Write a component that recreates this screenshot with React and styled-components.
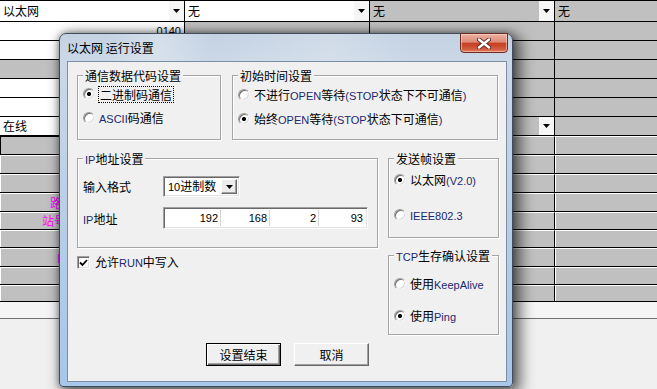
import React from 'react';
import styled, { createGlobalStyle } from 'styled-components';

const Global = createGlobalStyle`
  html, body { margin: 0; padding: 0; background: #f0f0f0; }
  body { font-family: "Noto Sans CJK SC", sans-serif; font-size: 12px; color: #000; }
  #root { width: 657px; height: 389px; overflow: hidden; }
`;

const Screen = styled.div`
  position: relative;
  width: 657px;
  height: 389px;
  overflow: hidden;
  background: #f0f0f0;
`;

/* ---------- background sheet ---------- */
const Sheet = styled.div`
  display: flex;
  flex-direction: column;
  width: 657px;
  font-family: "Noto Sans CJK SC", sans-serif;
  font-size: 12px;
`;

const SheetRow = styled.div`
  display: grid;
  grid-template-columns: 185px 185px 185px 1fr;
  box-sizing: border-box;
  height: ${(p) => p.$h}px;
  border-top: ${(p) => (p.$top ? '1px solid #000' : '0')};
  border-bottom: 1px solid #000;
`;

const Cell = styled.div`
  display: flex;
  align-items: center;
  min-width: 0;
  overflow: hidden;
  white-space: nowrap;
  background: ${(p) => (p.$white ? '#fff' : '#c0c0c0')};
  border-right: 1px solid #000;
  padding-left: 3px;
  &:last-child { border-right: 0; }
`;

const CellText = styled.span`
  flex: 1;
  line-height: 14px;
  text-align: ${(p) => (p.$right ? 'right' : 'left')};
  padding-right: ${(p) => (p.$right ? '3px' : '0')};
  font-family: ${(p) => (p.$num ? '"Liberation Sans", Arial, sans-serif' : 'inherit')};
  font-size: ${(p) => (p.$num ? '11px' : '12px')};
`;

const DropBtn = styled.span`
  flex: none;
  align-self: stretch;
  width: 15px;
  background: #f6f6f6;
  display: flex;
  align-items: center;
  justify-content: center;
`;

const LowCell = styled.div`
  display: flex;
  align-items: center;
  min-width: 0;
  overflow: hidden;
  white-space: nowrap;
  background: #c0c0c0;
  border-top: 1px solid ${(p) => (p.$focus ? '#000' : '#fff')};
  border-left: 1px solid ${(p) => (p.$focus ? '#000' : '#fff')};
  border-right: 1px solid #000;
  padding-left: ${(p) => p.$indent || 0}px;
  color: #ff00ff;
  line-height: 14px;
  &:last-child { border-right: 0; }
`;

const SheetFooter = styled.div`
  height: 16px;
  background: #f5f5f5;
  border-bottom: 1px solid #6e6e6e;
`;

/* ---------- dialog ---------- */
const Dialog = styled.div`
  position: absolute;
  left: 59px;
  top: 33px;
  width: 454px;
  height: 354px;
  box-sizing: border-box;
  display: flex;
  flex-direction: column;
  padding: 0 5px 4px 7px;
  border: 1px solid #3e4c5c;
  border-radius: 7px 7px 4px 4px;
  background: linear-gradient(180deg, #c4d2e2 0px, #cbd8e7 30px, #b7cde5 55%, #a7c6ea 100%);
  box-shadow: 5px 4px 14px 3px rgba(0, 0, 0, 0.55), 0 0 6px rgba(0, 0, 0, 0.35);
  font-family: "Noto Sans CJK SC", sans-serif;
  font-size: 12px;
`;

const TitleBar = styled.div`
  height: 27px;
  flex: none;
  display: flex;
  align-items: flex-start;
  justify-content: space-between;
  background: linear-gradient(100deg, rgba(255,255,255,0) 10%, rgba(255,255,255,0.28) 22%, rgba(255,255,255,0) 34%, rgba(255,255,255,0.2) 60%, rgba(255,255,255,0) 78%);
  margin: 0 -5px 0 -7px;
  padding: 0 4px 0 7px;
`;

const Title = styled.span`
  margin-top: 6px;
  line-height: 16px;
  color: #000;
`;

const CloseBtn = styled.span`
  margin-top: -1px;
  width: 48px;
  height: 20px;
  box-sizing: border-box;
  border: 1px solid #6a2a20;
  border-radius: 0 0 4px 4px;
  box-shadow: inset 0 0 0 1px rgba(255, 220, 210, 0.55);
  background: linear-gradient(180deg, #eab1a4 0%, #de8a76 45%, #c63f22 52%, #d0573b 80%, #e07a5c 100%);
  display: flex;
  align-items: center;
  justify-content: center;
`;

const Client = styled.div`
  flex: 1;
  display: flex;
  flex-direction: column;
  border: 1px solid #7b8fa4;
  background: #f0f0f0;
  padding: 13px 8px 0 9px;
`;

const TopRow = styled.div`
  display: flex;
  gap: 11px;
`;

const MidRow = styled.div`
  display: flex;
  gap: 10px;
  margin-top: 18px;
`;

const Col = styled.div`
  display: flex;
  flex-direction: column;
  gap: ${(p) => p.$gap || 0}px;
`;

const Group = styled.div`
  box-sizing: border-box;
  width: ${(p) => p.$w}px;
  height: ${(p) => p.$h}px;
  border: 1px solid #a5a5a5;
  box-shadow: inset 1px 1px 0 #fff, 1px 1px 0 #fff;
  display: flex;
  flex-direction: column;
  padding-left: 5px;
`;

const Caption = styled.span`
  align-self: flex-start;
  margin-top: -8px;
  padding: 0 2px;
  line-height: 15px;
  background: #f0f0f0;
  white-space: nowrap;
`;

const L = styled.span`
  font-family: "Liberation Sans", Arial, sans-serif;
  font-size: 11px;
  color: ${(p) => (p.$plain ? '#000' : '#1a2870')};
`;

const RadioRow = styled.label`
  display: flex;
  align-items: center;
  gap: 4px;
  height: 18px;
  margin-top: ${(p) => p.$mt}px;
  white-space: nowrap;
  line-height: 14px;
`;

const RadioDot = styled.span`
  flex: none;
  width: 12px;
  height: 12px;
  box-sizing: border-box;
  border-radius: 50%;
  border: 1px solid;
  border-color: #9c9c9c #f4f4f4 #f4f4f4 #9c9c9c;
  box-shadow: inset 1px 1px 0 #707070, inset -1px -1px 0 #dadada;
  background: ${(p) =>
    p.$on
      ? 'radial-gradient(circle at 50% 50%, #000 0, #000 1.7px, #fff 2.4px)'
      : '#fff'};
`;

const Focus = styled.span`
  border: 1px dotted #000;
  padding: 0 1px;
  margin-left: -1px;
  line-height: 15px;
`;

const FieldRow = styled.div`
  display: grid;
  grid-template-columns: 80px auto;
  align-items: center;
  margin-top: ${(p) => p.$mt}px;
  height: ${(p) => p.$h}px;
  white-space: nowrap;
`;

const Sunken = styled.div`
  box-sizing: border-box;
  border: 1px solid;
  border-color: #a0a0a0 #fff #fff #a0a0a0;
  box-shadow: inset 1px 1px 0 #696969, inset -1px -1px 0 #e3e3e3;
  background: #fff;
`;

const Select = styled(Sunken)`
  width: 77px;
  height: 21px;
  display: flex;
  align-items: center;
  padding: 2px;
`;

const SelectText = styled.span`
  flex: 1;
  padding-left: 2px;
  line-height: 14px;
`;

const SelectBtn = styled.span`
  flex: none;
  width: 16px;
  height: 15px;
  box-sizing: border-box;
  background: #ececec;
  border: 1px solid;
  border-color: #fff #696969 #696969 #fff;
  box-shadow: inset -1px -1px 0 #a0a0a0;
  display: flex;
  align-items: center;
  justify-content: center;
`;

const IpBox = styled(Sunken)`
  width: 205px;
  height: 22px;
  display: grid;
  grid-template-columns: 55px 49px 49px 1fr;
  padding: 2px;
`;

const IpCell = styled.span`
  display: flex;
  align-items: center;
  justify-content: flex-end;
  padding-right: 2px;
  border-right: ${(p) => (p.$last ? '0' : '1px solid #d6d6d6')};
  font-family: "Liberation Sans", Arial, sans-serif;
  font-size: 11px;
`;

const CheckRow = styled.label`
  display: flex;
  align-items: center;
  gap: 5px;
  margin-top: 8px;
  height: 13px;
  line-height: 14px;
  white-space: nowrap;
`;

const CheckBox = styled(Sunken)`
  width: 13px;
  height: 13px;
  display: flex;
  align-items: center;
  justify-content: center;
`;

const ButtonRow = styled.div`
  display: flex;
  justify-content: center;
  gap: 13px;
  margin-top: 8px;
`;

const Button = styled.button`
  width: 75px;
  height: 23px;
  box-sizing: border-box;
  font-family: "Noto Sans CJK SC", sans-serif;
  font-size: 12px;
  line-height: 14px;
  color: #000;
  padding: 0;
  background: #f0f0f0;
  border: 1px solid;
  border-color: ${(p) => (p.$default ? '#000' : '#fff #696969 #696969 #fff')};
  box-shadow: ${(p) =>
    p.$default
      ? 'inset 1px 1px 0 #fff, inset -1px -1px 0 #696969, inset -2px -2px 0 #a0a0a0'
      : 'inset -1px -1px 0 #a0a0a0'};
`;

const Arrow = ({ w = 7 }) => (
  <svg width={w} height="4" viewBox="0 0 7 4">
    <polygon points="0,0 7,0 3.5,4" fill="#000" />
  </svg>
);

const Radio = ({ on, mt, focus, children }) => (
  <RadioRow $mt={mt}>
    <RadioDot $on={on} />
    {focus ? <Focus>{children}</Focus> : <span>{children}</span>}
  </RadioRow>
);

const upperRows = [
  [
    { white: true, text: '以太网', drop: true },
    { white: true, text: '无', drop: true },
    { text: '无', drop: true },
    { text: '无' },
  ],
  [{ white: true, text: '0140', right: true, num: true }, {}, {}, {}],
  [{ white: true }, {}, {}, {}],
  [{}, {}, {}, {}],
  [{ white: true }, {}, {}, {}],
  [{ white: true }, {}, {}, {}],
  [{ white: true, text: '在线' }, {}, { drop: true }, {}],
];

const lowerRows = [
  { h: 19, focus: true },
  { h: 19 },
  { h: 19 },
  { h: 19, text: '路', indent: 49 },
  { h: 18, text: '站号', indent: 41 },
  { h: 18 },
  { h: 19, text: 'B', indent: 56 },
  { h: 18 },
  { h: 17 },
];

export default function App() {
  return (
    <Screen>
      <Global />
      <Sheet>
        {upperRows.map((row, i) => (
          <SheetRow key={i} $h={i === 0 ? 22 : 19} $top={i === 0}>
            {row.map((c, j) => (
              <Cell key={j} $white={c.white}>
                <CellText $right={c.right} $num={c.num}>{c.text}</CellText>
                {c.drop && (
                  <DropBtn>
                    <Arrow />
                  </DropBtn>
                )}
              </Cell>
            ))}
          </SheetRow>
        ))}
        {lowerRows.map((r, i) => (
          <SheetRow key={`l${i}`} $h={r.h}>
            <LowCell $focus={r.focus} $indent={r.indent}>{r.text}</LowCell>
            <LowCell />
            <LowCell />
            <LowCell />
          </SheetRow>
        ))}
        <SheetFooter />
      </Sheet>

      <Dialog>
        <TitleBar>
          <Title>以太网 运行设置</Title>
          <CloseBtn>
            <svg width="14" height="11" viewBox="0 0 14 11">
              <path d="M2 1.5 L12 9.5 M12 1.5 L2 9.5" stroke="#5a2a24" strokeWidth="4.2" strokeLinecap="round" />
              <path d="M2 1.5 L12 9.5 M12 1.5 L2 9.5" stroke="#fff" strokeWidth="2.4" strokeLinecap="round" />
            </svg>
          </CloseBtn>
        </TitleBar>
        <Client>
          <TopRow>
            <Group $w={144} $h={65}>
              <Caption>通信数据代码设置</Caption>
              <Radio on mt={2} focus>二进制码通信</Radio>
              <Radio mt={6}>
                <L>ASCII</L>码通信
              </Radio>
            </Group>
            <Group $w={266} $h={65}>
              <Caption>初始时间设置</Caption>
              <Radio mt={3}>
                不进行<L>OPEN</L>等待<L>(STOP</L>状态下不可通信<L>)</L>
              </Radio>
              <Radio on mt={6}>
                始终<L>OPEN</L>等待<L>(STOP</L>状态下可通信<L>)</L>
              </Radio>
            </Group>
          </TopRow>

          <MidRow>
            <Col>
              <Group $w={301} $h={90}>
                <Caption>
                  <L>IP</L>地址设置
                </Caption>
                <FieldRow $mt={8} $h={21}>
                  <span>输入格式</span>
                  <Select>
                    <SelectText>
                      <L $plain>10</L>进制数
                    </SelectText>
                    <SelectBtn>
                      <Arrow />
                    </SelectBtn>
                  </Select>
                </FieldRow>
                <FieldRow $mt={10} $h={22}>
                  <span>
                    <L>IP</L>地址
                  </span>
                  <IpBox>
                    <IpCell>192</IpCell>
                    <IpCell>168</IpCell>
                    <IpCell>2</IpCell>
                    <IpCell $last>93</IpCell>
                  </IpBox>
                </FieldRow>
              </Group>
              <CheckRow>
                <CheckBox>
                  <svg width="9" height="8" viewBox="0 0 9 8">
                    <path d="M1 3.5 L3.5 6 L8 1" stroke="#000" strokeWidth="1.8" fill="none" />
                  </svg>
                </CheckBox>
                <span>
                  允许<L>RUN</L>中写入
                </span>
              </CheckRow>
            </Col>
            <Col $gap={17}>
              <Group $w={111} $h={80}>
                <Caption>发送帧设置</Caption>
                <Radio on mt={5}>
                  以太网<L>(V2.0)</L>
                </Radio>
                <Radio mt={17}>
                  <L>IEEE802.3</L>
                </Radio>
              </Group>
              <Group $w={111} $h={80}>
                <Caption>
                  <L>TCP</L>生存确认设置
                </Caption>
                <Radio mt={10}>
                  使用<L>KeepAlive</L>
                </Radio>
                <Radio on mt={14}>
                  使用<L>Ping</L>
                </Radio>
              </Group>
            </Col>
          </MidRow>

          <ButtonRow>
            <Button $default>设置结束</Button>
            <Button>取消</Button>
          </ButtonRow>
        </Client>
      </Dialog>
    </Screen>
  );
}
